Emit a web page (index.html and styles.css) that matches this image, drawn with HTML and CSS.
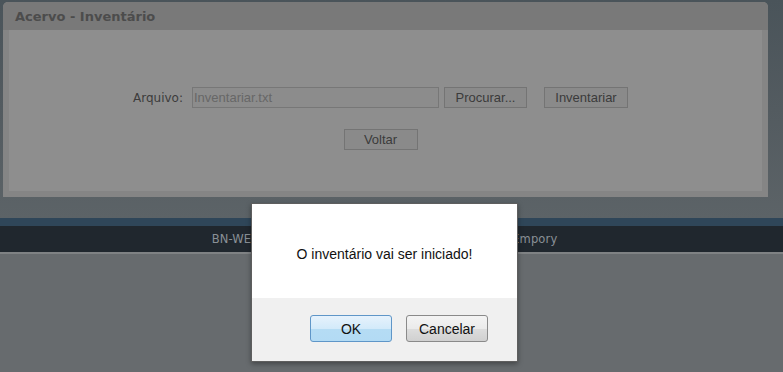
FILE: index.html
```html
<!DOCTYPE html>
<html lang="pt-BR">
<head>
  <meta charset="UTF-8" />
  <title>Acervo - Inventário</title>
  <link rel="stylesheet" href="styles.css">
</head>
<body>

  <div class="page-top">
    <div class="panel">
      <div class="panel-title">Acervo - Inventário</div>
      <div class="panel-body">
        <form class="file-row">
          <label for="arquivo">Arquivo:</label>
          <input type="text" id="arquivo" class="file-input" value="Inventariar.txt" readonly />
          <button type="button" class="btn btn-browse">Procurar...</button>
          <button type="button" class="btn btn-run">Inventariar</button>
        </form>
        <div class="back-row">
          <button type="button" class="btn btn-back">Voltar</button>
        </div>
      </div>
    </div>
  </div>

  <div class="footer">BN-WEB - Sistema de Gerenciamento de Acervos - Empory</div>
  <div class="page-bottom"></div>

  <!-- confirmação -->
  <div class="dialog">
    <div class="dialog-msg">O inventário vai ser iniciado!</div>
    <div class="dialog-actions">
      <button type="button" class="dlg-btn dlg-ok">OK</button>
      <button type="button" class="dlg-btn dlg-cancel">Cancelar</button>
    </div>
  </div>

</body>
</html>
```

FILE: styles.css
```css
html, body {
  height: 100%;
}

body {
  margin: 0;
  background: #676b6e;
  font-family: "DejaVu Sans", Verdana, sans-serif;
  display: flex;
  flex-direction: column;
}

.page-top {
  background: linear-gradient(180deg, #4a545a 0%, #535b60 50%, #5c6367 100%);
  padding: 2px 15px 21px 3px;
}

.panel {
  background: #858585;
  border-radius: 5px 5px 0 0;
  padding-bottom: 6px;
}

.panel-title {
  height: 28px;
  line-height: 29px;
  padding-left: 12px;
  background: #797979;
  border-radius: 5px 5px 0 0;
  color: #4c4c4c;
  font-weight: bold;
  font-size: 13px;
}

.panel-body {
  margin: 0 6px 0 6px;
  background: #8e8e8e;
  height: 161px;
  padding: 57px 10px 0 0;
  box-sizing: border-box;
}

.file-row {
  display: flex;
  justify-content: center;
  align-items: center;
  margin: 0;
}

.file-row label {
  font-size: 12px;
  color: #3c3c3c;
  margin-right: 9px;
}

.file-input {
  width: 247px;
  height: 21px;
  box-sizing: border-box;
  border: 1px solid #777;
  background: #8c8c8c;
  color: #676767;
  font-family: "Liberation Sans", Arial, sans-serif;
  font-size: 13px;
  padding: 0 1px;
  outline: none;
}

.btn {
  height: 21px;
  box-sizing: border-box;
  border: 1px solid #747474;
  background: #8a8a8a;
  color: #3b3b3b;
  font-family: "Liberation Sans", Arial, sans-serif;
  font-size: 13px;
  padding: 0;
}

.btn-browse {
  width: 83px;
  margin-left: 5px;
}

.btn-run {
  width: 84px;
  margin-left: 17px;
}

.back-row {
  display: flex;
  justify-content: center;
  margin-top: 21px;
}

.btn-back {
  width: 74px;
}

.footer {
  border-top: 8px solid #2f4659;
  border-bottom: 2px solid #7f8284;
  background: #20272e;
  height: 26px;
  line-height: 26px;
  text-align: center;
  color: #8a9096;
  font-size: 11.5px;
  letter-spacing: 0.15px;
  padding-right: 14px;
}

.page-bottom {
  flex: 1;
  background: #676b6e;
}

.dialog {
  position: absolute;
  left: 251px;
  top: 203px;
  width: 267px;
  height: 159px;
  box-sizing: border-box;
  border: 1px solid #5e5e5e;
  box-shadow: 0 2px 5px rgba(0, 0, 0, 0.35);
  background: #f0f0f0;
  font-family: "Liberation Sans", Arial, sans-serif;
  display: flex;
  flex-direction: column;
}

.dialog-msg {
  height: 94px;
  background: #fff;
  display: flex;
  align-items: center;
  justify-content: center;
  padding-top: 6px;
  box-sizing: border-box;
  font-size: 14px;
  color: #111;
}

.dialog-actions {
  display: flex;
  justify-content: flex-end;
  gap: 14px;
  padding: 17px 29px 0 0;
}

.dlg-btn {
  width: 82px;
  height: 27px;
  border-radius: 3px;
  font-family: "Liberation Sans", Arial, sans-serif;
  font-size: 14px;
  color: #111;
  padding: 0;
}

.dlg-ok {
  border: 1px solid #5f96c8;
  background: linear-gradient(180deg, #e6f2fc 0%, #d3eafa 50%, #b5dcf4 51%, #b3dbf4 100%);
}

.dlg-cancel {
  border: 1px solid #8a8a8a;
  background: linear-gradient(180deg, #f4f4f4 0%, #ebebeb 50%, #dddddd 51%, #d0d0d0 100%);
}
```
